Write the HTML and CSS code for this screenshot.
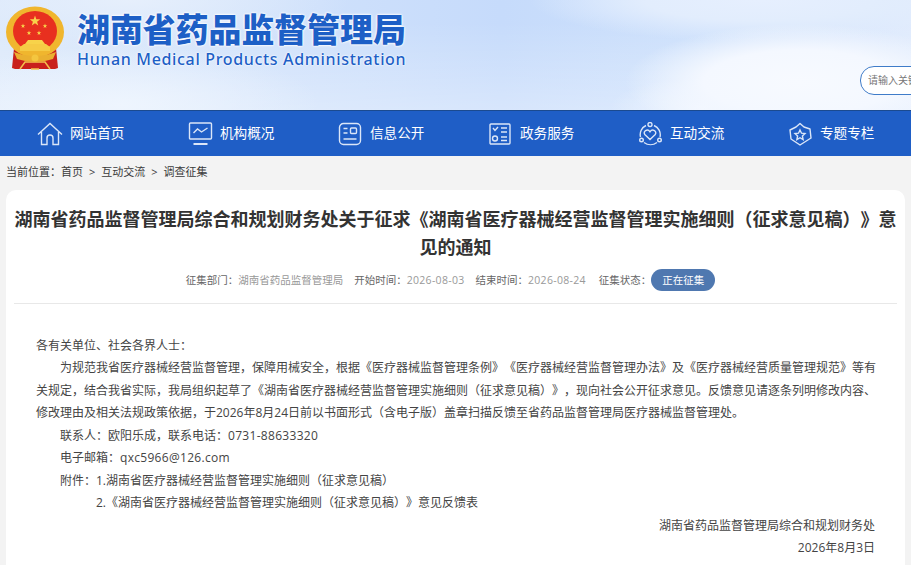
FILE: index.html
```html
<!DOCTYPE html>
<html lang="zh-CN">
<head>
  <meta charset="UTF-8" />
  <meta name="viewport" content="width=device-width, initial-scale=1.0"/>
  <title>湖南省药品监督管理局</title>
  <link rel="stylesheet" href="styles.css">
</head>
<body>
  <header class="top">
    <svg class="emblem" viewBox="0 0 60 64" width="60" height="64">
      <defs>
        <path id="star" d="M0-10 2.35-3.24 9.51-3.09 3.8 1.24 5.88 8.09 0 4-5.88 8.09-3.8 1.24-9.51-3.09-2.35-3.24Z"/>
      </defs>
      <path d="M9 42 7 62 10 63H50L53 62 51 42Z" fill="#c9201c"/>
      <path d="M15 63 20 56H40L45 63M26 63H34" stroke="#f2c14e" stroke-width="1.5" fill="none"/>
      <ellipse cx="30" cy="26" rx="29" ry="25.500" fill="#f0b62e"/>
      <ellipse cx="30" cy="25" rx="22" ry="20" fill="#e8301f"/>
      <use href="#star" transform="translate(30 15) scale(.55)" fill="#f8d34a"/>
      <use href="#star" transform="translate(18 20) scale(.24)" fill="#f8d34a"/>
      <use href="#star" transform="translate(24 27) scale(.24)" fill="#f8d34a"/>
      <use href="#star" transform="translate(34 27) scale(.24)" fill="#f8d34a"/>
      <use href="#star" transform="translate(40 20) scale(.24)" fill="#f8d34a"/>
      <path d="M23 34H37L40 38H20Z" fill="#f8d34a"/>
      <path d="M15 41 19 38H41L45 41V45H15Z" fill="#f6cb45"/>
      <path d="M9 46Q30 54 51 46L48 53Q30 59 12 53Z" fill="#eab030"/>
      <circle cx="30" cy="52" r="3.500" fill="#f4c63f"/>
    </svg>
    <div class="brand">
      <div class="brand-cn">湖南省药品监督管理局</div>
      <div class="brand-en">Hunan Medical Products Administration</div>
    </div>
    <div class="search">请输入关键字</div>
  </header>

  <nav class="nav">
    <a class="nav-item" href="#">
      <svg class="ico" width="26" height="24" viewBox="0 0 26 24"><path d="M1 12.500 13 1.500 25 12.500M4.500 10V22.500H10V16a3 3 0 0 1 6 0V22.500H21.500V10"/></svg>
      <span>网站首页</span>
    </a>
    <a class="nav-item" href="#">
      <svg class="ico" width="26" height="24" viewBox="0 0 26 24"><rect x="2.500" y="1" width="22" height="16" rx="1"/><path d="M6.500 11 10.500 7 14.500 10 20.500 6"/><path d="M6.500 22H20.500" stroke-width="2"/></svg>
      <span>机构概况</span>
    </a>
    <a class="nav-item" href="#">
      <svg class="ico" width="26" height="24" viewBox="0 0 26 24"><rect x="2.500" y="1.500" width="21" height="21" rx="4"/><path d="M6.500 6.500H10.500M6.500 11H10.500M6.500 17H19.500"/><rect x="13.500" y="6" width="6" height="5.500" rx="1"/></svg>
      <span>信息公开</span>
    </a>
    <a class="nav-item" href="#">
      <svg class="ico" width="26" height="24" viewBox="0 0 26 24"><rect x="3" y="2" width="20" height="20" rx="1"/><path d="M6 6 8 8.500 11 5M14 6H20M14 10H20M14 15H20M14 18.500H20"/><circle cx="8" cy="16.500" r="2.500"/></svg>
      <span>政务服务</span>
    </a>
    <a class="nav-item" href="#">
      <svg class="ico" width="26" height="24" viewBox="0 0 26 24"><path d="M9 3.500A10 10 0 0 0 3.500 15M7 20.500A11 11 0 0 0 20 20.500M23 15A10 10 0 0 0 17 3.500"/><circle cx="13" cy="2.500" r="2"/><circle cx="4.500" cy="18" r="1.800"/><circle cx="22.500" cy="18" r="1.800"/><path d="M13 17.500 7.800 12.500C5.500 9.500 10.500 6 13 9.800 15.500 6 20.500 9.500 18.200 12.500Z"/></svg>
      <span>互动交流</span>
    </a>
    <a class="nav-item" href="#">
      <svg class="ico" width="26" height="24" viewBox="0 0 26 24"><path d="M9 5 13 1.500 17 5 23 7 24 16 13 23 4 17 3 8Z" stroke-linejoin="round"/><path d="M13 8 14.500 11.200 18 11.600 15.400 14 16.100 17.500 13 15.700 9.900 17.500 10.600 14 8 11.600 11.500 11.200Z"/></svg>
      <span>专题专栏</span>
    </a>
  </nav>

  <div class="crumb">
    <span>当前位置：</span><a href="#">首页</a><span class="sep">&gt;</span><a href="#">互动交流</a><span class="sep">&gt;</span><a href="#">调查征集</a>
  </div>

  <main class="card">
    <h1 class="title">湖南省药品监督管理局综合和规划财务处关于征求《湖南省医疗器械经营监督管理实施细则（征求意见稿）》意见的通知</h1>
    <div class="meta">
      <span class="meta-item">征集部门：<em>湖南省药品监督管理局</em></span>
      <span class="meta-item">开始时间：<em class="num">2026-08-03</em></span>
      <span class="meta-item">结束时间：<em class="num">2026-08-24</em></span>
      <span class="meta-item">征集状态：<b class="status">正在征集</b></span>
    </div>
    <div class="content">
      <p>各有关单位、社会各界人士：</p>
      <p class="indent">为规范我省医疗器械经营监督管理，保障用械安全，根据《医疗器械监督管理条例》《医疗器械经营监督管理办法》及《医疗器械经营质量管理规范》等有关规定，结合我省实际，我局组织起草了《湖南省医疗器械经营监督管理实施细则（征求意见稿）》，现向社会公开征求意见。反馈意见请逐条列明修改内容、修改理由及相关法规政策依据，于2026年8月24日前以书面形式（含电子版）盖章扫描反馈至省药品监督管理局医疗器械监督管理处。</p>
      <p class="indent">联系人：欧阳乐成，联系电话：<span class="num">0731-88633320</span></p>
      <p class="indent">电子邮箱：<span class="num">qxc5966@126.com</span></p>
      <p class="indent">附件：1.湖南省医疗器械经营监督管理实施细则（征求意见稿）</p>
      <p class="indent-more">2.《湖南省医疗器械经营监督管理实施细则（征求意见稿）》意见反馈表</p>
      <p class="right">湖南省药品监督管理局综合和规划财务处</p>
      <p class="right">2026年8月3日</p>
    </div>
  </main>
</body>
</html>
```

FILE: styles.css
```css
html, body {
  margin: 0;
  height: 565px;
  overflow: hidden;
}
body {
  font-family: "Open Sans", "Noto Sans CJK SC", sans-serif;
  background-color: #f3f3f3;
  color: #333;
  text-spacing-trim: space-all;
}
a {
  color: inherit;
  text-decoration: none;
}
.top {
  display: flex;
  height: 110px;
  overflow: hidden;
  background-color: #d4e4fc;
  background-image:
    radial-gradient(ellipse 175px 58px at 800px 82px, #f7faff 0%, #f4f8ff 55%, rgba(244, 248, 255, 0) 100%),
    radial-gradient(ellipse 90px 30px at 700px 108px, #f0f6ff 0%, rgba(240, 246, 255, 0) 100%),
    radial-gradient(ellipse 230px 42px at 760px 0, #e6effe 0%, #e2edfd 50%, rgba(226, 237, 253, 0) 100%),
    radial-gradient(ellipse 200px 60px at 120px 105px, #eef5fe 0%, rgba(238, 245, 254, 0) 100%),
    radial-gradient(ellipse 220px 50px at 130px 0, #e6effc 0%, rgba(230, 239, 252, 0) 100%),
    linear-gradient(180deg, rgba(255, 255, 255, 0) 20%, rgba(255, 255, 255, .3) 100%),
    linear-gradient(90deg, #dce9fb 0%, #c6dbfb 55%, #cee1fc 78%, #e0ebfd 100%);
}
.emblem {
  flex: none;
  margin: 6px 0 0 5px;
}
.brand {
  flex: none;
  width: 795px;
  margin-left: 12px;
}
.brand-cn {
  margin-top: 7px;
  font-size: 32.900px;
  line-height: 46px;
  font-weight: 900;
  color: #1d5fc6;
  white-space: nowrap;
  text-shadow: 0 0 2px #fff, 0 0 2px #fff, 0 0 3px #fff;
}
.brand-en {
  margin-top: -4px;
  font-family: "Noto Sans", sans-serif;
  font-size: 16px;
  line-height: 20px;
  font-weight: 500;
  letter-spacing: .66px;
  color: #1d5fc6;
  white-space: nowrap;
  text-shadow: 0 0 2px #fff, 0 0 2px #fff;
}
.search {
  flex: none;
  box-sizing: border-box;
  width: 180px;
  height: 29px;
  margin: 66px 0 0 -12px;
  padding-left: 7px;
  border: 1px solid #3f7cc9;
  border-radius: 14px;
  background-color: #fff;
  font-size: 10px;
  line-height: 27px;
  color: #777;
  white-space: nowrap;
}
.nav {
  display: flex;
  box-sizing: border-box;
  height: 46px;
  padding-left: 38px;
  background-color: #1f5ec6;
  border-top: 1px solid #1b4a8f;
  overflow: hidden;
}
.nav-item {
  flex: none;
  display: flex;
  align-items: center;
  gap: 7px;
  width: 150px;
  font-size: 13.600px;
  color: #fff;
}
.nav-item span {
  margin-bottom: 3px;
}
.ico {
  flex: none;
  margin-left: -1px;
  fill: none;
  stroke: #dbe6f8;
  stroke-width: 1.4;
}
.crumb {
  display: flex;
  height: 34px;
  padding-left: 6px;
  font-size: 11px;
  line-height: 32px;
  color: #3a3a3a;
}
.sep {
  margin: 0 6px;
}
.card {
  margin: 0 6px;
  padding: 15px 8px 0;
  height: 400px;
  background-color: #fff;
  border-radius: 10px 10px 0 0;
}
.title {
  margin: 0;
  font-size: 18px;
  line-height: 28px;
  font-weight: 700;
  text-align: center;
  color: #333;
}
.meta {
  display: flex;
  justify-content: center;
  align-items: center;
  gap: 11px;
  margin: 8px 0 0;
  padding: 0 10px 12px 0;
  border-bottom: 1px solid #e8e8e8;
  font-size: 10.500px;
  line-height: 22px;
  color: #666;
}
.meta-item:last-child {
  margin-left: 2px;
}
.meta em {
  font-style: normal;
  color: #999;
}
.status {
  display: inline-block;
  width: 64px;
  border-radius: 11px;
  background-color: #4f78b0;
  color: #fff;
  font-weight: 400;
  text-align: center;
}
.num {
  letter-spacing: .3px;
}
.content {
  padding: 30.500px 21px 0 22px;
  font-size: 12px;
  line-height: 22.500px;
  color: #444;
}
.content p {
  margin: 0;
}
.content .indent {
  text-indent: 2em;
}
.content .indent-more {
  text-indent: 5em;
}
.content .right {
  padding-right: 1px;
  text-align: right;
}
```
